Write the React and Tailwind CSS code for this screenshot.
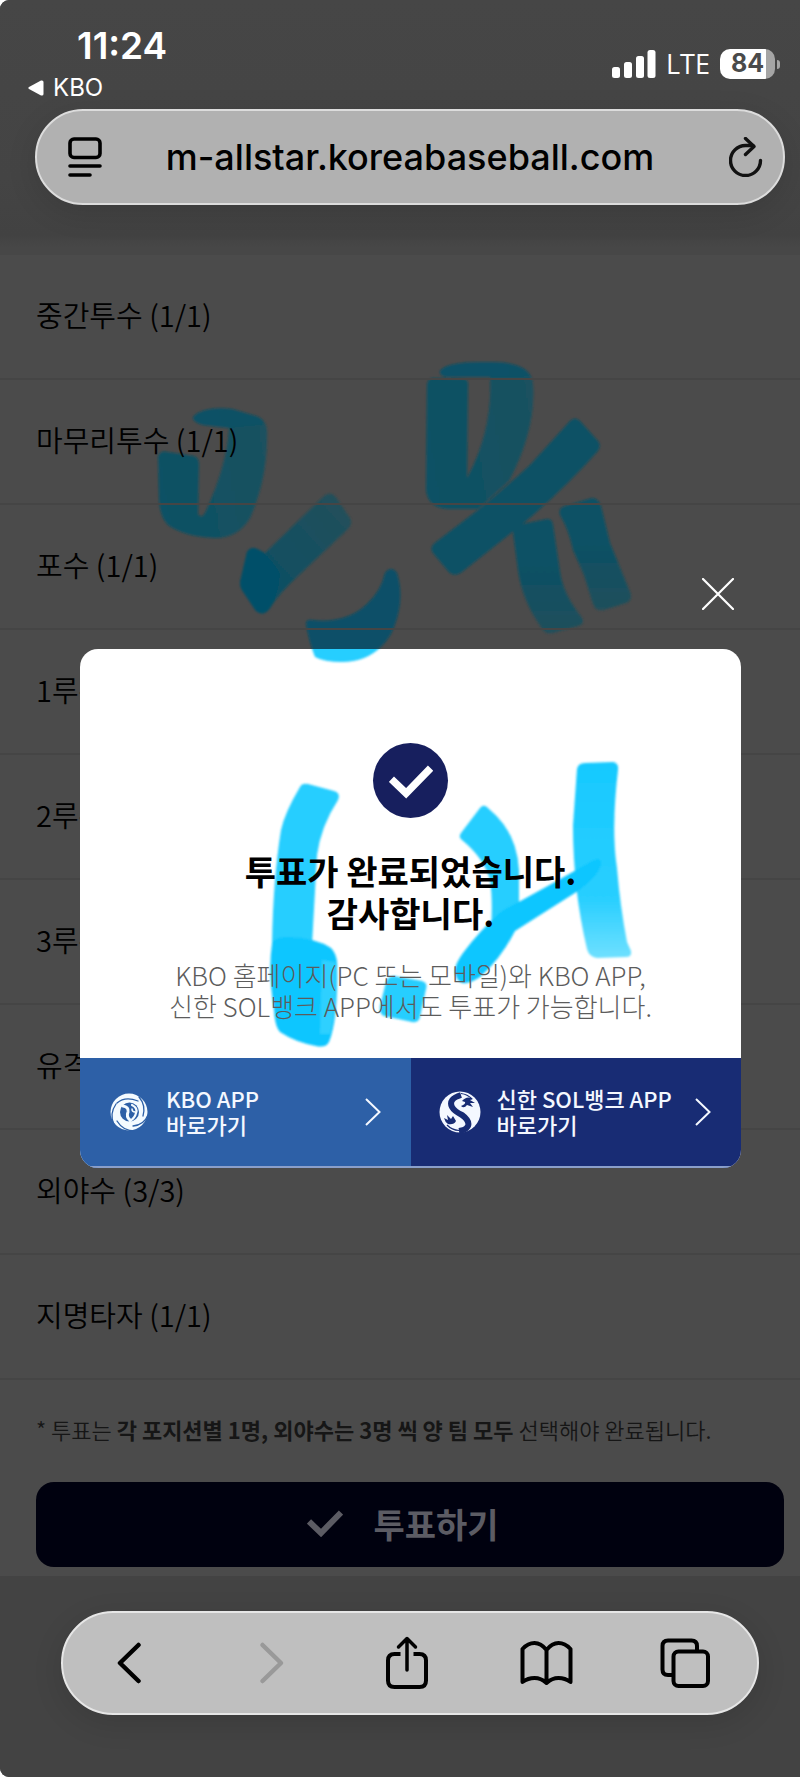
import React, { useState } from 'react';

const positions = [
  { name: '중간투수', picked: 1, max: 1 },
  { name: '마무리투수', picked: 1, max: 1 },
  { name: '포수', picked: 1, max: 1 },
  { name: '1루수', picked: 1, max: 1 },
  { name: '2루수', picked: 1, max: 1 },
  { name: '3루수', picked: 1, max: 1 },
  { name: '유격수', picked: 1, max: 1 },
  { name: '외야수', picked: 3, max: 3 },
  { name: '지명타자', picked: 1, max: 1 },
];

// The pen stroke that runs across the top edge of the popup
const ARC_STROKE =
  'M306 624 Q306 619 312 620 Q346 624 367 604 Q381 591 385 573 Q391 565 397 573 Q406 602 391 634 Q374 662 342 662 Q324 662 315 657 Q309 642 306 624Z';

function StatusBar() {
  return (
    <div className="flex items-start justify-between pl-7 pr-5 pt-6 text-white">
      <div>
        <div className="pl-[49px] text-[37px] font-semibold leading-[44px]">11:24</div>
        <a href="#kbo" className="flex items-center gap-[9px] text-[24px] leading-[40px]">
          <svg viewBox="0 0 16 16" className="h-4 w-4" fill="currentColor">
            <path d="M1 7 L13 .6 Q15.500 0 15.500 2 V14 Q15.500 16 13 15.400 L1 9 Q-.4 8 1 7Z" />
          </svg>
          KBO
        </a>
      </div>
      <div className="flex items-center gap-[10px] pt-[22px]">
        <svg viewBox="0 0 44 28" className="h-7 w-11" fill="currentColor">
          <rect x="0" y="17" width="8" height="11" rx="2.500" />
          <rect x="12" y="12" width="8" height="16" rx="2.500" />
          <rect x="24" y="6" width="8" height="22" rx="2.500" />
          <rect x="35.500" y="0" width="8" height="28" rx="2.500" />
        </svg>
        <span className="font-['Open_Sans'] text-[27px] font-medium leading-9">LTE</span>
        <div className="flex items-center gap-[2px]">
          <div className="flex h-[30px] w-[55px] items-center justify-center rounded-[10px] bg-[linear-gradient(90deg,#fff_83%,#a5a5a5_83%)] text-[25px] font-bold text-[#4a4a4a]">
            84
          </div>
          <div className="h-[9px] w-[3px] rounded-r-full bg-[#a5a5a5]" />
        </div>
      </div>
    </div>
  );
}

function AddressBar() {
  return (
    <div className="ml-[35px] mr-[15px] mt-[1px] flex h-24 items-center justify-between rounded-full border-2 border-[#dcdcdc] bg-[#b1b1b1] px-5 text-black shadow-[0_8px_30px_rgba(0,0,0,0.12)]">
      <button type="button" aria-label="페이지 메뉴" className="px-[11px]">
        <svg viewBox="0 0 34 40" className="h-10 w-[34px]" fill="none" stroke="currentColor" strokeWidth="3.600" strokeLinecap="round">
          <rect x="2" y="2" width="30" height="18.500" rx="4" />
          <path d="M2 29H32M2 38H22" />
        </svg>
      </button>
      <input
        type="text"
        readOnly
        aria-label="주소"
        value="m-allstar.koreabaseball.com"
        className="min-w-0 flex-1 bg-transparent text-center text-[36px] font-medium outline-none"
      />
      <button type="button" aria-label="새로고침" className="pl-[22px]">
        <svg viewBox="0 0 34 40" className="h-10 w-[34px]" fill="none" stroke="#111" strokeWidth="3.400" strokeLinecap="round" strokeLinejoin="round">
          <path d="M31.500 23.500A15 15 0 1 1 16.500 8.500H24" />
          <path d="M16.500 1.500L25 9.500L16.500 17.500" />
        </svg>
      </button>
    </div>
  );
}

function PageDoodle() {
  return (
    <svg viewBox="0 0 800 680" className="absolute inset-x-0 top-0 w-full" aria-hidden="true">
      <defs>
        <filter id="soft"><feGaussianBlur stdDeviation="0.800" /></filter>
        <linearGradient id="inkA" x1="0" x2="1" y1="0.600" y2="0.400">
          <stop offset="0" stopColor="#0a5165" />
          <stop offset="1" stopColor="#1a5160" />
        </linearGradient>
        <linearGradient id="inkB" x1="0" x2="1" y1="1" y2="0">
          <stop offset="0.300" stopColor="#0f5063" />
          <stop offset="1" stopColor="#254f59" />
        </linearGradient>
        <linearGradient id="inkC" x1="0" x2="0" y1="0" y2="1">
          <stop offset="0.400" stopColor="#0b5165" />
          <stop offset="1" stopColor="#214f5b" />
        </linearGradient>
      </defs>
      <g filter="url(#soft)">
        <path fill="url(#inkA)" d="M158 457 Q160 450 168 452 L194 456 Q199 458 199 464 L198 514 Q202 520 206 511 Q227 465 229 428 L203 425 Q190 421 194 416 Q205 406 232 409 L256 416 Q268 420 267 436 Q267 480 250 518 Q238 538 215 538 Q185 537 168 525 Q160 517 159 500Z" />
        <path fill="#06516a" fillOpacity="0.500" d="M194 416 Q205 406 232 409 L256 416 Q266 420 262 425 L229 428 L203 425 Q190 421 194 416Z" />
        <path fill="url(#inkB)" d="M247 552 Q251 546 257 549 L265 553 L323 497 Q329 491 335 496 L350 518 Q353 524 348 529 L300 574 Q280 592 270 608 Q264 617 256 611 L242 590 Q239 585 241 578Z" />
        <path fill="#045069" d="M247 552 Q251 546 257 549 Q268 553 280 573 Q280 592 270 608 Q264 617 256 611 L242 590 Q239 585 241 578Z" />
        <path fill="#085067" d={ARC_STROKE} />

        <path fill="url(#inkA)" d="M440 371 Q447 361 490 362 Q532 362 533 385 Q536 430 509 481 L478 509 H448 Q428 508 426 490 L427 386 Q427 378 434 378 L463 379 Q469 379 468 386 L467 478 Q493 430 490 377 L447 377 Q439 376 440 371Z" />
        <path fill="#06516a" fillOpacity="0.700" d="M440 371 Q447 361 490 362 Q525 362 531 377 L490 377 L447 377 Q439 376 440 371Z" />
        <path fill="#0c5165" d="M570 421 Q575 416 580 421 L598 441 Q602 446 597 452 Q565 488 525 522 L462 572 Q454 578 448 571 L433 553 Q429 547 436 542 L478 510 Q505 488 530 465Z" />
        <path fill="url(#inkC)" d="M513 532 Q514 525 522 524 L547 519 Q552 518 553 525 L560 572 Q563 594 582 618 Q585 624 578 626 L553 633 Q545 635 541 627 Q522 600 518 570Z" />
        <path fill="url(#inkC)" d="M560 515 Q558 508 565 506 L592 498 Q598 498 601 506 L610 543 L630 592 Q633 600 626 603 L604 610 Q596 612 593 604 L584 575 L573 550 Q569 530 560 515Z" />
      </g>
    </svg>
  );
}

function PopupDoodle() {
  return (
    <svg viewBox="80 649 661 409" className="absolute inset-x-0 top-0 w-full" aria-hidden="true">
      <defs>
        <linearGradient id="penFade" x1="0" x2="0" y1="0" y2="1">
          <stop offset="0" stopColor="#17c9ff" />
          <stop offset="0.700" stopColor="#29cfff" />
          <stop offset="1" stopColor="#6fe0ff" />
        </linearGradient>
      </defs>
      <g fill="#25ceff" filter="url(#soft)">
        <path d={ARC_STROKE} />
        <path d="M300 787 Q302 783 308 784 L334 791 Q341 793 338 800 Q321 826 317 855 L312 945 L272 945 Q273 880 281 830 Q285 812 300 787Z" />
        <path fill="#0cc6ff" d="M272 944 Q274 936 290 937 Q316 938 331 948 Q338 955 337 968 Q338 1020 329 1042 Q326 1048 316 1046 Q295 1042 280 1032 Q275 1027 274 1010 Q268 970 272 944Z" />
        <path fill="#2fd0ff" d="M322 960 L335 962 Q337 1010 330 1034 L320 1034Z" />
        <path d="M386 982 Q388 976 394 976 L422 981 Q428 983 426 989 L420 1017 Q419 1023 412 1022 L384 1016 Q379 1014 380 1006Z" />
        <path d="M461 833 L480 808 Q484 803 489 809 Q517 832 519 870 L519 925 L491 930 Q493 900 490 880 Q484 858 462 840 Q458 837 461 833Z" />
        <path fill="url(#penFade)" d="M577 769 Q578 763 585 763 L613 762 Q619 763 618 770 Q611 830 617 868 Q620 905 627 942 L631 951 Q632 957 626 957 L597 958 Q589 957 587 949 Q573 890 573 825Z" />
        <path fill="#0cc6ff" d="M456 976 Q452 968 463 953 Q480 930 502 911 Q545 888 592 861 Q602 856 601 865 Q598 876 578 891 Q540 915 515 931 Q500 960 480 977 Q460 990 456 976Z" />
      </g>
    </svg>
  );
}

function CheckMark({ className }) {
  return (
    <svg viewBox="0 0 36 28" className={className} fill="none" stroke="currentColor" strokeWidth="6" aria-hidden="true">
      <path d="M2 12.500L14 24L34 3.500" />
    </svg>
  );
}

function KboLogo() {
  return (
    <svg viewBox="0 0 42 42" className="h-[42px] w-[42px] shrink-0" aria-hidden="true">
      <circle cx="21" cy="21" r="18.500" fill="#f4fbff" />
      <g fill="none" stroke="#2d60a7" strokeWidth="1.300" strokeLinecap="round">
        <path d="M9 12Q17 5 30 10M31 6Q38 14 35 25M40 24Q36 34 25 35M27 40Q15 40 9 30M6 34Q1 23 8 13" />
      </g>
      <circle cx="21.500" cy="21" r="9.500" fill="#2d60a7" />
      <g fill="none" stroke="#f4fbff" strokeLinecap="round">
        <path strokeWidth="3" d="M15 15Q21 16 20 21Q18 26 22 29" />
        <path strokeWidth="2.200" d="M24 14Q30 17 28 22Q27 27 22 30" />
        <path strokeWidth="1.500" d="M24 18Q24 21 27 21" />
      </g>
    </svg>
  );
}

function SolLogo() {
  return (
    <svg viewBox="0 0 42 42" className="h-[42px] w-[42px] shrink-0" aria-hidden="true">
      <circle cx="21" cy="21" r="20.500" fill="#f4f8ff" />
      <path fill="none" stroke="#182c74" strokeWidth="6" d="M22 4Q9 8 13 16Q15 20 23 24Q31 30 29 35Q27 39 20 40" />
      <path fill="none" stroke="#182c74" strokeWidth="1.200" d="M22 2.500A18 18 0 0 1 33 8M20 39.500A18 18 0 0 1 8 34" />
      <path fill="#182c74" d="M23 10Q28 4 34 8L31 9L36 12L31 12L34 16L28 14Q25 18 22 15Q27 13 26 11ZM5 27L9 29L8 24L12 28L14 25L17 30Q15 34 9 33Q6 31 5 27Z" />
    </svg>
  );
}

function AppLink({ href, logo, name, className }) {
  return (
    <a
      href={href}
      className={`flex h-[110px] flex-1 items-center gap-4 border-b-2 border-[#8a9fca] pl-7 pr-[30px] text-[22px] font-medium leading-[26px] text-[#f4f8ff] ${className}`}
    >
      {logo}
      <span className="flex-1 whitespace-nowrap pb-[2px]">
        {name}
        <br />
        바로가기
      </span>
      <svg viewBox="0 0 16 28" className="h-7 w-4 shrink-0" fill="none" stroke="currentColor" strokeWidth="2">
        <path d="M1 1L14.500 14L1 27" />
      </svg>
    </a>
  );
}

function VotePopup({ onClose }) {
  return (
    <div className="absolute inset-x-0 top-0 pl-20 pr-[59px] pt-[574px]" role="dialog" aria-label="투표 완료">
      <div className="flex justify-end">
        <button type="button" aria-label="닫기" onClick={onClose} className="mr-[3px] p-1 text-white">
          <svg viewBox="0 0 32 32" className="h-8 w-8" stroke="currentColor" strokeWidth="2.200" strokeLinecap="round">
            <path d="M1 1L31 31M31 1L1 31" />
          </svg>
        </button>
      </div>
      <div className="relative mt-[35px] overflow-hidden rounded-[18px] bg-white">
        <PopupDoodle />
        <div className="relative flex flex-col items-center pb-[37px] pt-[94px] text-center">
          <div className="flex h-[75px] w-[75px] items-center justify-center rounded-full bg-[#171f5e] text-white">
            <CheckMark className="h-9 w-[44px]" />
          </div>
          <h1 className="mt-8 text-[34px] font-bold leading-[42px] text-black">
            투표가 완료되었습니다.
            <br />
            감사합니다.
          </h1>
          <p className="mt-[25px] whitespace-nowrap text-[26px] font-light leading-[31px] text-[#5c5c5c]">
            KBO 홈페이지(PC 또는 모바일)와 KBO APP,
            <br />
            신한 SOL뱅크 APP에서도 투표가 가능합니다.
          </p>
        </div>
        <div className="relative flex">
          <AppLink href="#kbo-app" logo={<KboLogo />} name="KBO APP" className="bg-[#2d60a7]" />
          <AppLink href="#sol-app" logo={<SolLogo />} name="신한 SOL뱅크 APP" className="bg-[#182c74]" />
        </div>
      </div>
    </div>
  );
}

function BrowserToolbar() {
  const button = 'flex h-16 w-16 items-center justify-center';
  return (
    <nav className="ml-[61px] mr-[41px] flex h-[104px] items-center justify-between rounded-full border-2 border-[#e6e6e6] bg-[#bfbfbf] pl-[34px] pr-10 text-black shadow-[0_8px_30px_rgba(0,0,0,0.12)]">
      <button type="button" aria-label="뒤로" className={button}>
        <svg viewBox="0 0 24 42" className="h-[42px] w-6" fill="none" stroke="currentColor" strokeWidth="4.500" strokeLinecap="round" strokeLinejoin="round">
          <path d="M21.500 3L3 21L21.500 39" />
        </svg>
      </button>
      <button type="button" aria-label="앞으로" disabled className={button}>
        <svg viewBox="0 0 24 42" className="h-[42px] w-6 overflow-visible" fill="none" stroke="#999" strokeWidth="4.500" strokeLinecap="round" strokeLinejoin="round">
          <path d="M6.500 3L25 21L6.500 39" />
        </svg>
      </button>
      <button type="button" aria-label="공유" className={button}>
        <svg viewBox="0 0 44 54" className="h-[54px] w-11" fill="none" stroke="currentColor" strokeWidth="4" strokeLinecap="round" strokeLinejoin="round">
          <path strokeLinecap="butt" d="M15.500 18H9.500Q3 18 3 24.500V44.500Q3 51 9.500 51H34.500Q41 51 41 44.500V24.500Q41 18 34.500 18H28.500" />
          <path strokeWidth="3.500" d="M22 34V3M13.500 11L22 2.500L30.500 11" />
        </svg>
      </button>
      <button type="button" aria-label="책갈피" className={button}>
        <svg viewBox="0 0 53 46" className="h-[46px] w-[53px]" fill="none" stroke="currentColor" strokeWidth="4" strokeLinejoin="round">
          <path d="M26.500 10Q21 3 14.500 3Q8 3 2.500 9V42Q8 38 14.500 38Q21 38 26.500 43Q32 38 38.500 38Q45 38 50.500 42V9Q45 3 38.500 3Q32 3 26.500 10V43" />
        </svg>
      </button>
      <button type="button" aria-label="탭" className={button}>
        <svg viewBox="0 0 50 50" className="h-[50px] w-[50px]" fill="none" stroke="currentColor" strokeWidth="4">
          <path d="M13 37H8Q2.500 37 2.500 31.500V8Q2.500 2.500 8 2.500H31.500Q37 2.500 37 8V13" />
          <rect x="13.500" y="13.500" width="34.500" height="34.500" rx="5" />
        </svg>
      </button>
    </nav>
  );
}

export default function App() {
  const [showPopup, setShowPopup] = useState(true);

  return (
    <div className="relative overflow-hidden rounded-l-[9px] bg-[#4b4b4b] font-['Noto_Sans_CJK_KR',sans-serif]">
      <header className="h-[255px] bg-[linear-gradient(#464646_0%,#444_70%,#424242_92%,#474747_97%)] font-['Inter',sans-serif]">
        <StatusBar />
        <AddressBar />
      </header>

      <PageDoodle />

      <main className="relative">
        <ul>
          {positions.map(({ name, picked, max }) => (
            <li
              key={name}
              className="flex h-[125px] items-center border-b-2 border-[#454545] pb-1 pl-9 text-[29px] font-[350] text-black"
            >
              {name} ({picked}/{max})
            </li>
          ))}
        </ul>
        <div className="pb-[9px] pl-9 pr-4 pt-[33px]">
          <p className="whitespace-nowrap text-[22px] font-[350] leading-8 text-[#161616]">
            * 투표는 <strong className="font-bold">각 포지션별 1명, 외야수는 3명 씩 양 팀 모두</strong> 선택해야 완료됩니다.
          </p>
          <button
            type="button"
            className="mt-[37px] flex h-[85px] w-full items-center justify-center gap-[30px] rounded-[18px] bg-[#00010f] pb-[3px] pr-[14px] text-[34px] font-bold text-[#5c5c64]"
          >
            <CheckMark className="h-7 w-9" />
            투표하기
          </button>
        </div>
      </main>

      <footer className="relative bg-[#434343] pb-[62px] pt-[35px]">
        <BrowserToolbar />
      </footer>

      {showPopup && <VotePopup onClose={() => setShowPopup(false)} />}
    </div>
  );
}
